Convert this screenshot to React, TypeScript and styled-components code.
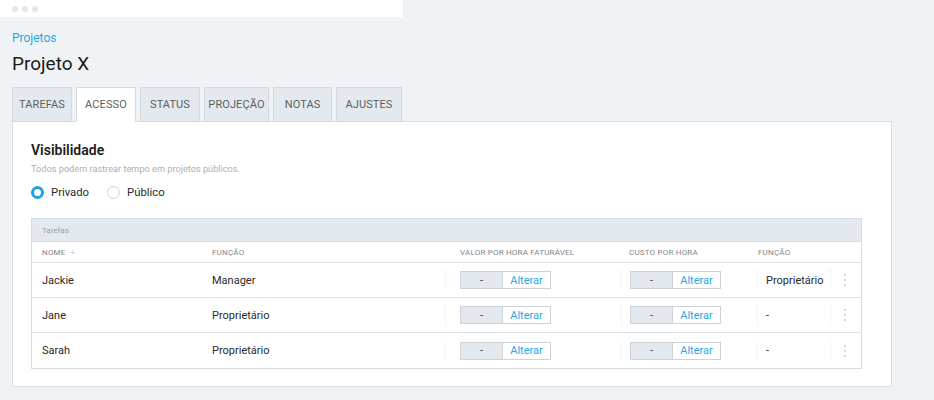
import React from 'react'
import styled, { createGlobalStyle } from 'styled-components'

const GlobalStyle = createGlobalStyle`
  html, body {
    margin: 0;
    padding: 0;
    background: #eff3f6;
    font-family: Roboto, "Liberation Sans", Arial, sans-serif;
    color: #222;
  }
`

const Page = styled.div`
  width: 934px;
  height: 400px;
  overflow: hidden;
`

const WindowBar = styled.div`
  width: 403px;
  height: 17px;
  background: #ffffff;
  display: flex;
  align-items: center;
  gap: 4px;
  padding-left: 12px;
  box-sizing: border-box;
`

const Dot = styled.span`
  width: 6px;
  height: 6px;
  border-radius: 50%;
  background: #e3e7eb;
`

const Content = styled.div`
  padding: 14px 42px 0 12px;
`

const Crumb = styled.a`
  display: block;
  font-size: 12px;
  color: #27a8e6;
  line-height: 14px;
  text-decoration: none;
`

const Title = styled.h1`
  margin: 0;
  margin-top: 8px;
  font-size: 19px;
  font-weight: 400;
  line-height: 22px;
  color: #1b1b1b;
`

const Tabs = styled.div`
  display: flex;
  gap: 4px;
  margin-top: 12px;
  position: relative;
  z-index: 1;
`

const Tab = styled.div<{ $active?: boolean; $w: number }>`
  width: ${({ $w }) => $w}px;
  height: 35px;
  box-sizing: border-box;
  display: flex;
  align-items: center;
  justify-content: center;
  font-size: 11px;
  letter-spacing: 0.1px;
  color: #5b5f63;
  background: ${({ $active }) => ($active ? '#ffffff' : '#e3e9ee')};
  border: 1px solid #d3dadf;
  border-bottom: ${({ $active }) => ($active ? '1px solid #ffffff' : '1px solid #d3dadf')};
`

const Panel = styled.div`
  margin-top: -1px;
  width: 880px;
  height: 266px;
  box-sizing: border-box;
  background: #ffffff;
  border: 1px solid #d8dee3;
  padding: 19px 29px 0 18px;
`

const SectionTitle = styled.h2`
  margin: 0;
  font-size: 14px;
  font-weight: 600;
  line-height: 18px;
  color: #1c1c1c;
`

const Hint = styled.p`
  margin: 4px 0 0;
  font-size: 9.2px;
  line-height: 12px;
  color: #aab0b5;
`

const RadioRow = styled.div`
  display: flex;
  gap: 18px;
  margin-top: 11px;
  align-items: center;
`

const RadioLabel = styled.label`
  display: flex;
  align-items: center;
  gap: 7px;
  font-size: 11.3px;
  color: #2a2a2a;
`

const Circle = styled.span<{ $checked?: boolean }>`
  width: 13px;
  height: 13px;
  border-radius: 50%;
  box-sizing: border-box;
  border: ${({ $checked }) => ($checked ? '3.5px solid #1aa3e8' : '1px solid #cfd5da')};
  background: #ffffff;
`

const Table = styled.div`
  margin-top: 19px;
  width: 831px;
  border: 1px solid #d6dce1;
  box-sizing: border-box;
`

const TableCaption = styled.div`
  height: 23px;
  box-sizing: border-box;
  background: #e3e9ee;
  border-bottom: 1px solid #d6dce1;
  display: flex;
  align-items: center;
  padding-left: 10px;
  font-size: 8px;
  color: #9aa2a8;
`

const Row = styled.div<{ $head?: boolean }>`
  display: grid;
  grid-template-columns: 170px 243px 176px 136px 73px 31px;
  height: ${({ $head }) => ($head ? '21px' : '35px')};
  box-sizing: border-box;
  border-bottom: 1px solid #dde2e6;
  &:last-child {
    border-bottom: none;
    height: 35px;
  }
`

const Cell = styled.div<{ $pad?: number; $sep?: boolean }>`
  position: relative;
  display: flex;
  align-items: center;
  padding-left: ${({ $pad }) => $pad ?? 10}px;
  font-size: 11px;
  color: #2a2a2a;
  ${({ $sep }) =>
    $sep &&
    `&::before {
      content: '';
      position: absolute;
      left: 0;
      top: 7px;
      bottom: 7px;
      border-left: 1px dotted #eceff1;
    }`}
`

const HeadCell = styled(Cell)`
  font-size: 8px;
  color: #7f868b;
  letter-spacing: 0.2px;
`

const SortIcon = styled.span`
  margin-left: 5px;
  font-size: 8px;
  color: #9aa1a6;
`

const Field = styled.div`
  display: flex;
  height: 18px;
  width: 91px;
  box-sizing: border-box;
  border: 1px solid #cdd4d9;
`

const FieldValue = styled.span`
  width: 41px;
  background: #e3e9ee;
  border-right: 1px solid #cdd4d9;
  display: flex;
  align-items: center;
  justify-content: center;
  font-size: 11px;
  color: #444;
`

const FieldAction = styled.span`
  flex: 1;
  display: flex;
  align-items: center;
  justify-content: center;
  font-size: 11px;
  color: #2aa6e3;
`

const Kebab = styled.div`
  display: flex;
  flex-direction: column;
  gap: 3px;
  margin-left: 8px;
  span {
    width: 2px;
    height: 2px;
    border-radius: 50%;
    background: #c6ccd1;
  }
`

const tabs = [
  { label: 'TAREFAS', w: 60 },
  { label: 'ACESSO', w: 60, active: true },
  { label: 'STATUS', w: 60 },
  { label: 'PROJEÇÃO', w: 65 },
  { label: 'NOTAS', w: 59 },
  { label: 'AJUSTES', w: 66 },
]

const members = [
  { name: 'Jackie', role: 'Manager', owner: 'Proprietário' },
  { name: 'Jane', role: 'Proprietário', owner: '-' },
  { name: 'Sarah', role: 'Proprietário', owner: '-' },
]

const RateField = () => (
  <Field>
    <FieldValue>-</FieldValue>
    <FieldAction>Alterar</FieldAction>
  </Field>
)

export default function App() {
  return (
    <Page>
      <GlobalStyle />
      <WindowBar>
        <Dot />
        <Dot />
        <Dot />
      </WindowBar>
      <Content>
        <Crumb href="#">Projetos</Crumb>
        <Title>Projeto X</Title>
        <Tabs>
          {tabs.map((t) => (
            <Tab key={t.label} $w={t.w} $active={t.active}>
              {t.label}
            </Tab>
          ))}
        </Tabs>
        <Panel>
          <SectionTitle>Visibilidade</SectionTitle>
          <Hint>Todos podem rastrear tempo em projetos públicos.</Hint>
          <RadioRow>
            <RadioLabel>
              <Circle $checked />
              Privado
            </RadioLabel>
            <RadioLabel>
              <Circle />
              Público
            </RadioLabel>
          </RadioRow>
          <Table>
            <TableCaption>Tarefas</TableCaption>
            <Row $head>
              <HeadCell>
                NOME<SortIcon>÷</SortIcon>
              </HeadCell>
              <HeadCell>FUNÇÃO</HeadCell>
              <HeadCell $pad={15}>VALOR POR HORA FATURÁVEL</HeadCell>
              <HeadCell $pad={8}>CUSTO POR HORA</HeadCell>
              <HeadCell $pad={1}>FUNÇÃO</HeadCell>
              <HeadCell />
            </Row>
            {members.map((m) => (
              <Row key={m.name}>
                <Cell>{m.name}</Cell>
                <Cell>{m.role}</Cell>
                <Cell $pad={15} $sep>
                  <RateField />
                </Cell>
                <Cell $pad={9} $sep>
                  <RateField />
                </Cell>
                <Cell $pad={9} $sep>
                  {m.owner}
                </Cell>
                <Cell $pad={6} $sep>
                  <Kebab>
                    <span />
                    <span />
                    <span />
                  </Kebab>
                </Cell>
              </Row>
            ))}
          </Table>
        </Panel>
      </Content>
    </Page>
  )
}
